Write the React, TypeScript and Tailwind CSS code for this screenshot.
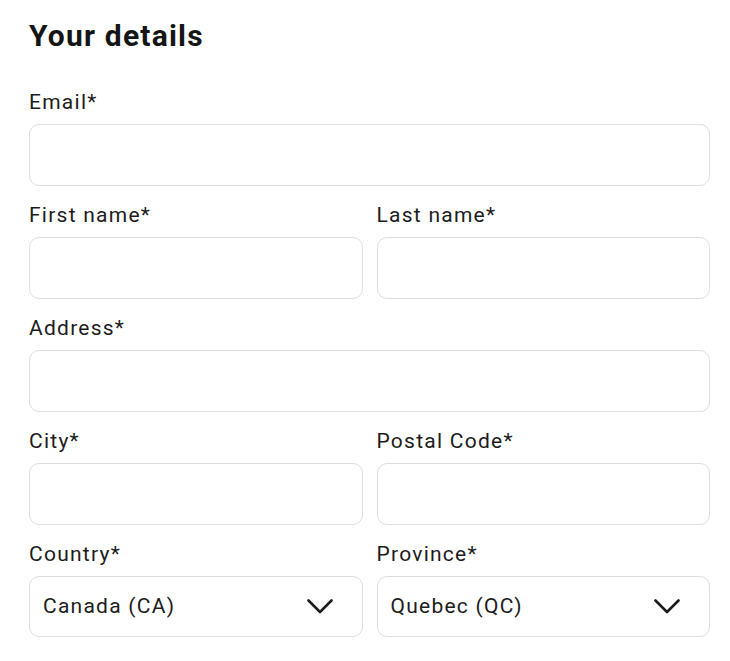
const font = { fontFamily: "Roboto, 'Noto Sans', sans-serif" };

function Field({ label, className = "" }: { label: string; className?: string }) {
  return (
    <div className={`flex flex-col ${className}`}>
      <label className="text-[21px] leading-[24px] tracking-[1.25px] text-[#1c1c1c]">{label}</label>
      <input
        type="text"
        className="mt-[10px] h-[62px] w-full rounded-[10px] border border-[#dedede] bg-white px-[14px] text-[21px] outline-none"
      />
    </div>
  );
}

function SelectField({ label, value }: { label: string; value: string }) {
  return (
    <div className="flex flex-col">
      <label className="text-[21px] leading-[24px] tracking-[1.25px] text-[#1c1c1c]">{label}</label>
      <div className="mt-[10px] flex h-[61px] items-center justify-between rounded-[10px] border border-[#dedede] bg-white pl-[13px] pr-[29px]">
        <span className="text-[21px] tracking-[1.25px] text-[#1c1c1c]">{value}</span>
        <svg width="26" height="15" viewBox="0 0 26 15" fill="none">
          <path d="M1.5 1.5 L13 13 L24.5 1.5" stroke="#1c1c1c" strokeWidth="2.6" strokeLinecap="round" strokeLinejoin="round" />
        </svg>
      </div>
    </div>
  );
}

export default function App() {
  return (
    <div className="min-h-screen bg-white pl-[29px] pr-[20px] pt-[18px]" style={font}>
      <h1 className="text-[30px] leading-[36px] font-bold tracking-[1.2px] text-[#151515]">Your details</h1>
      <div className="mt-[36px] flex flex-col gap-[17px]">
        <Field label="Email*" />
        <div className="grid grid-cols-2 gap-[14px]">
          <Field label="First name*" />
          <Field label="Last name*" />
        </div>
        <Field label="Address*" />
        <div className="grid grid-cols-2 gap-[14px]">
          <Field label="City*" />
          <Field label="Postal Code*" />
        </div>
        <div className="grid grid-cols-2 gap-[14px]">
          <SelectField label="Country*" value="Canada (CA)" />
          <SelectField label="Province*" value="Quebec (QC)" />
        </div>
      </div>
    </div>
  );
}
